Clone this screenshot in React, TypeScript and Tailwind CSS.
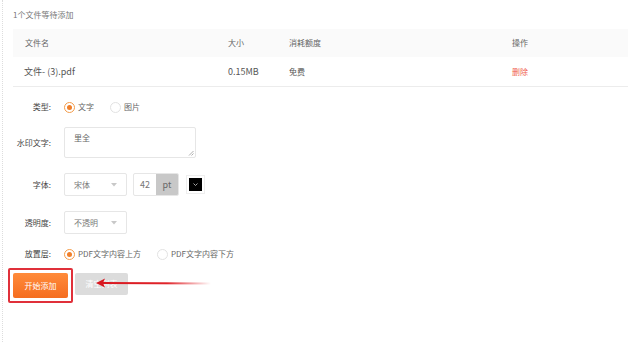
import React from 'react';

const font = { fontFamily: '"Noto Sans CJK SC", "Noto Sans", sans-serif' };

const Radio = ({ checked, label }: { checked?: boolean; label: string }) => (
  <div className="flex items-center gap-[3px]">
    <span
      className={`w-[11px] h-[11px] rounded-full border flex items-center justify-center ${
        checked ? 'border-[#f39c4a]' : 'border-[#e2e2e2]'
      }`}
    >
      {checked && <span className="w-[5px] h-[5px] rounded-full bg-[#f07f2a]" />}
    </span>
    <span className="text-[8px] text-[#666]">{label}</span>
  </div>
);

const Select = ({ value }: { value: string }) => (
  <div className="w-[63px] h-[23px] border border-[#e6e6e6] rounded-[2px] flex items-center justify-between pl-[9px] pr-[9px]">
    <span className="text-[8px] text-[#777]">{value}</span>
    <svg width="6" height="4" viewBox="0 0 6 4">
      <path d="M0 0 L6 0 L3 3.5 Z" fill="#c8c8c8" />
    </svg>
  </div>
);

const Label = ({ children }: { children: React.ReactNode }) => (
  <div className="w-[38px] text-right text-[8px] text-[#444] mr-[13px] whitespace-nowrap">{children}</div>
);

export default function App() {
  return (
    <div className="w-[640px] h-[342px] bg-white relative overflow-hidden" style={font}>
      <div className="absolute left-[2px] top-0 bottom-0 border-l border-dotted border-[#ddd]" />
      <div className="pl-[13px] pr-[12px] pt-[9px]">
        <div className="text-[8px] text-[#777] h-[20px] leading-[12px]">1个文件等待添加</div>
        <div className="h-[28px] bg-[#fafafa] flex items-center text-[8px] text-[#666]">
          <div className="w-[215px] pl-[12px]">文件名</div>
          <div className="w-[61px]">大小</div>
          <div className="w-[223px]">消耗额度</div>
          <div>操作</div>
        </div>
        <div className="h-[30px] border-b border-[#ececec] flex items-center text-[8px] text-[#555]">
          <div className="w-[215px] pl-[11px] text-[9px]">文件- (3).pdf</div>
          <div className="w-[61px] text-[9px]">0.15MB</div>
          <div className="w-[223px]">免费</div>
          <div className="text-[#f0624d]">删除</div>
        </div>

        <div className="flex items-center mt-[13px] h-[14px]">
          <Label>类型:</Label>
          <div className="flex items-center gap-[16px]">
            <Radio checked label="文字" />
            <Radio label="图片" />
          </div>
        </div>

        <div className="flex items-center mt-[13px]">
          <Label>水印文字:</Label>
          <div className="w-[132px] h-[31px] border border-[#e6e6e6] rounded-[2px] relative px-[9px] pt-[5px]">
            <span className="text-[8px] text-[#666] block leading-[10px]">里全</span>
            <svg className="absolute right-[1px] bottom-[1px]" width="6" height="6" viewBox="0 0 6 6">
              <path d="M5.5 1 L1 5.5 M5.5 3.5 L3.5 5.5" stroke="#999" strokeWidth="0.8" />
            </svg>
          </div>
        </div>

        <div className="flex items-center mt-[15px]">
          <Label>字体:</Label>
          <Select value="宋体" />
          <div className="ml-[6px] w-[46px] h-[23px] border border-[#e6e6e6] rounded-[2px] flex overflow-hidden">
            <div className="w-[22px] flex items-center justify-center text-[9px] text-[#777]">42</div>
            <div className="flex-1 bg-[#c8c8c8] flex items-center justify-center text-[9px] text-[#666]">pt</div>
          </div>
          <div className="ml-[7px] w-[19px] h-[19px] border border-[#eee] flex items-center justify-center">
            <div className="w-[13px] h-[13px] bg-black flex items-center justify-center">
              <svg width="5" height="3" viewBox="0 0 5 3">
                <path d="M0.5 0.5 L2.5 2.5 L4.5 0.5" stroke="#ccc" strokeWidth="0.8" fill="none" />
              </svg>
            </div>
          </div>
        </div>

        <div className="flex items-center mt-[15px]">
          <Label>透明度:</Label>
          <Select value="不透明" />
        </div>

        <div className="flex items-center mt-[13px] h-[14px]">
          <Label>放置层:</Label>
          <div className="flex items-center gap-[16px]">
            <Radio checked label="PDF文字内容上方" />
            <Radio label="PDF文字内容下方" />
          </div>
        </div>

        <div className="flex items-start mt-[7px] relative">
          <div className="-ml-[5px] p-[3px] border-2 border-[#e0303a] rounded-[2px]">
            <div className="w-[55px] h-[25px] rounded-[2px] bg-gradient-to-b from-[#ff8b3a] to-[#f56d1f] flex items-center justify-center text-[8px] text-white">
              开始添加
            </div>
          </div>
          <div className="ml-[2px] mt-[5px] w-[53px] h-[22px] rounded-[2px] bg-[#dcdcdc] flex items-center justify-center text-[8px] text-white">
            清空列表
          </div>
          <svg className="absolute left-[70px] top-[8px]" width="130" height="14" viewBox="0 0 130 14">
            <defs>
              <linearGradient id="ar" x1="0" x2="1" y1="0" y2="0">
                <stop offset="0" stopColor="#d8171f" />
                <stop offset="0.6" stopColor="#e0242a" />
                <stop offset="1" stopColor="#e0242a" stopOpacity="0" />
              </linearGradient>
            </defs>
            <path d="M18 7 L128 7.5" stroke="url(#ar)" strokeWidth="2" />
            <path d="M13 7 L22 2.5 L20 7 L22 11.5 Z" fill="#d8171f" />
          </svg>
        </div>
      </div>
    </div>
  );
}
